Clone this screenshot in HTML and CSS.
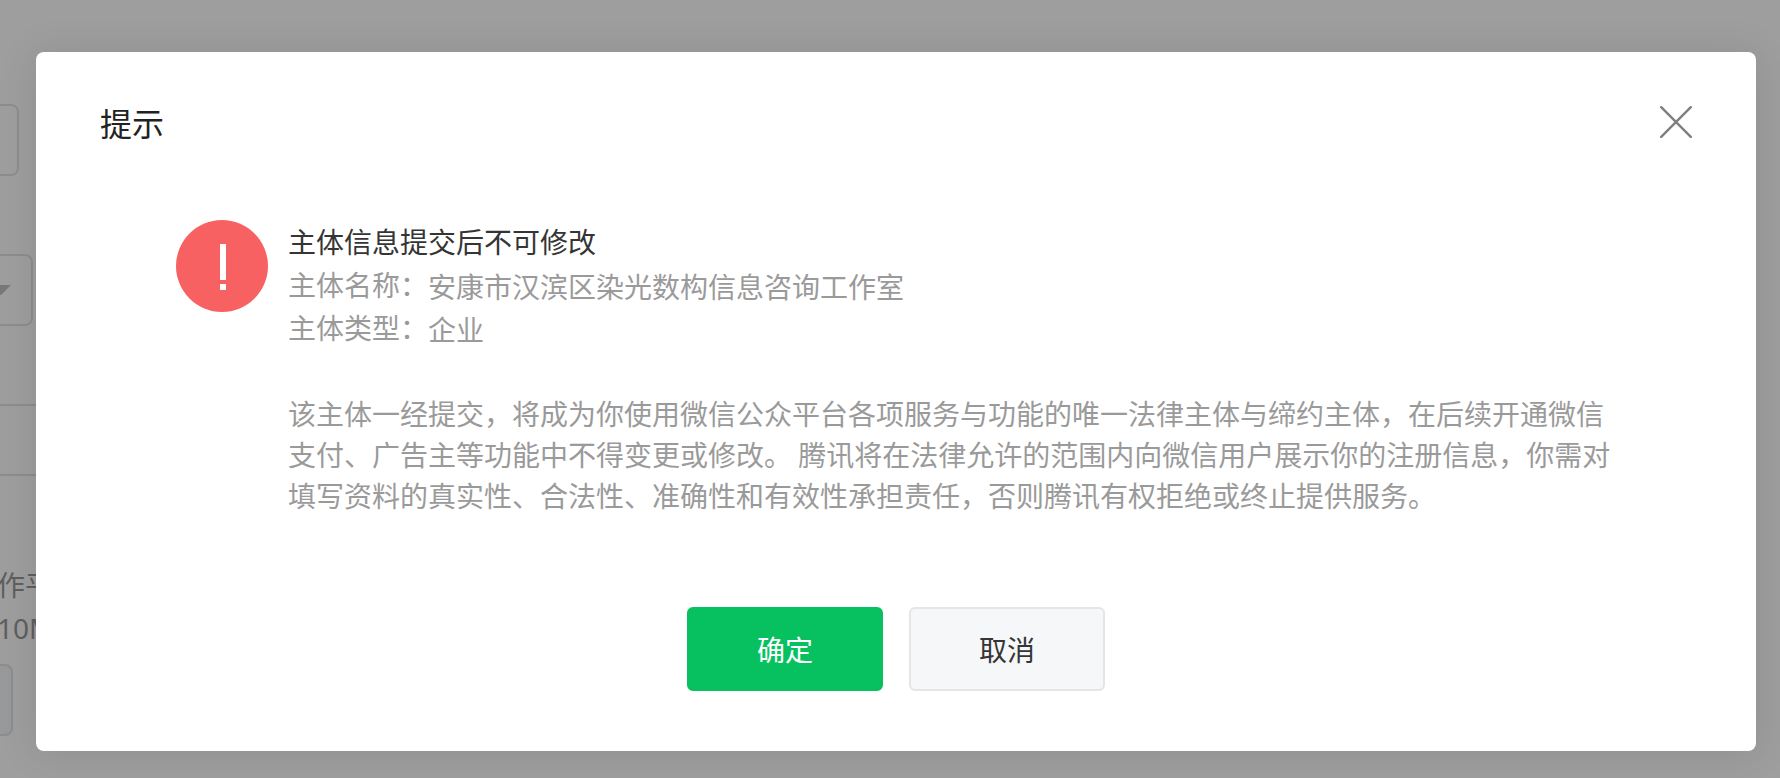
FILE: index.html
```html
<!DOCTYPE html>
<html lang="zh-CN">
<head>
<meta charset="utf-8">
<meta name="viewport" content="width=device-width, initial-scale=1">
<title>提示</title>
<link rel="stylesheet" href="styles.css">
</head>
<body>
<div class="stage">
  <main class="page" aria-hidden="true">
    <div class="field field-input"></div>
    <div class="field field-select"><span class="caret"></span></div>
    <div class="rule-band"></div>
    <div class="hint">
      <p class="hint-line">作平</p>
      <p class="hint-line">10M</p>
    </div>
    <div class="field field-upload"></div>
  </main>
  <div class="mask">
    <section class="dialog" role="dialog" aria-modal="true" aria-labelledby="dialog-title">
      <header class="dialog-header">
        <h1 class="dialog-title" id="dialog-title">提示</h1>
        <button class="close" type="button" aria-label="关闭">
          <svg class="close-icon" viewBox="0 0 32 32" aria-hidden="true"><path d="M1.2 1.2 30.8 30.8M30.8 1.2 1.2 30.8"/></svg>
        </button>
      </header>
      <div class="dialog-body">
        <svg class="warn-icon" viewBox="0 0 92 92" aria-hidden="true">
          <circle cx="46" cy="46" r="46" fill="#f76161"/>
          <path d="M44 24h6v36h-6zM44 64h6v6h-6z" fill="#fff"/>
        </svg>
        <div class="message">
          <h2 class="message-title">主体信息提交后不可修改</h2>
          <dl class="facts">
            <div class="fact"><dt>主体名称：</dt><dd>安康市汉滨区染光数构信息咨询工作室</dd></div>
            <div class="fact"><dt>主体类型：</dt><dd>企业</dd></div>
          </dl>
          <p class="notice">该主体一经提交，将成为你使用微信公众平台各项服务与功能的唯一法律主体与缔约主体，在后续开通微信支付、广告主等功能中不得变更或修改。 腾讯将在法律允许的范围内向微信用户展示你的注册信息，你需对填写资料的真实性、合法性、准确性和有效性承担责任，否则腾讯有权拒绝或终止提供服务。</p>
        </div>
      </div>
      <footer class="dialog-footer">
        <button class="btn btn-primary" type="button">确定</button>
        <button class="btn btn-default" type="button">取消</button>
      </footer>
    </section>
  </div>
</div>
</body>
</html>
```
FILE: styles.css
```css
* {
  box-sizing: border-box;
}

body,
h1,
h2,
p,
dl,
dd {
  margin: 0;
}

body {
  font-family: "Noto Sans CJK SC", sans-serif;
  font-size: 28px;
  font-weight: 400;
  background: #fff;
}

h1,
h2 {
  font-weight: 400;
}

.stage {
  display: grid;
  min-height: 100vh;
  overflow: hidden;
}

.page,
.mask {
  grid-area: 1 / 1;
}

/* Form behind the dialog */
.page {
  padding-top: 104px;
}

.field {
  height: 72px;
  border: 2px solid #e4e4e4;
  border-left: 0;
  border-radius: 0 8px 8px 0;
}

.field-input {
  width: 19px;
  margin-bottom: 78px;
}

.field-select {
  width: 33px;
  margin-bottom: 78px;
  padding-top: 29px;
}

.caret {
  display: block;
  width: 11px;
  height: 10px;
  background: #c4c4c4;
  clip-path: polygon(0 0, 100% 0, 10% 100%, 0 100%);
}

.rule-band {
  width: 50%;
  height: 72px;
  margin-bottom: 88px;
  border-top: 2px solid #e4e4e4;
  border-bottom: 2px solid #e4e4e4;
}

.hint {
  margin: 0 0 14px -3px;
  font-family: "Noto Sans", "Noto Sans CJK SC", sans-serif;
  line-height: 43px;
  color: #9a9a9a;
}

.field-upload {
  width: 13px;
  background: #f6f7f9;
}

/* Dialog */
.mask {
  z-index: 1;
  display: grid;
  padding: 52px 24px 27px 36px;
  background: rgba(0, 0, 0, 0.38);
}

.dialog {
  display: flex;
  flex-direction: column;
  padding: 46px 64px 60px;
  background: #fff;
  border-radius: 8px;
  box-shadow: 0 2px 40px rgba(0, 0, 0, 0.1);
}

.dialog-header {
  display: flex;
  align-items: center;
  justify-content: space-between;
  margin-bottom: 74px;
}

.dialog-title {
  font-size: 32px;
  line-height: 48px;
  color: #222;
}

.close {
  width: 32px;
  height: 32px;
  padding: 0;
  border: 0;
  background: none;
  cursor: pointer;
}

.close-icon {
  display: block;
  width: 32px;
  height: 32px;
  fill: none;
  stroke: #7f7f7f;
  stroke-width: 2.4;
  stroke-linecap: round;
}

.dialog-body {
  display: flex;
  align-items: flex-start;
  gap: 20px;
  padding: 0 72px 0 76px;
}

.warn-icon {
  flex: none;
  width: 92px;
  height: 92px;
}

.message {
  flex: 1;
  color: #9a9a9a;
}

.message-title {
  font-size: 28px;
  line-height: 43px;
  color: #353535;
}

.fact {
  display: flex;
  line-height: 43px;
}

.fact dd {
  padding-top: 4px;
  line-height: 39px;
}

.notice {
  margin-top: 44px;
  line-height: 41px;
}

.dialog-footer {
  display: flex;
  justify-content: center;
  gap: 26px;
  margin-top: auto;
}

.btn {
  width: 196px;
  height: 84px;
  padding: 0;
  border: 2px solid transparent;
  border-radius: 6px;
  font: inherit;
  cursor: pointer;
}

.btn-primary {
  border-color: #07c160;
  background: #07c160;
  color: #fff;
}

.btn-default {
  border-color: #e4e5e7;
  background: #f6f7f9;
  color: #353535;
}
```
